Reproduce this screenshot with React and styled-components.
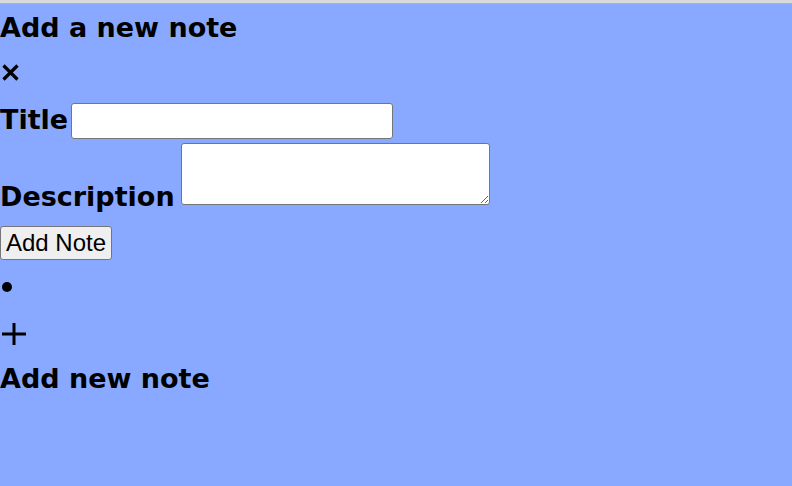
import styled, { createGlobalStyle } from 'styled-components';

const GlobalStyle = createGlobalStyle`
  html, body {
    margin: 0;
    padding: 0;
    background: #88a9ff;
  }
  body {
    font-family: "DejaVu Sans", Inter, sans-serif;
    color: #000;
    border-top: 3px solid #d9d9d9;
    min-height: 483px;
  }
`;

const Page = styled.main`
  display: flex;
  flex-direction: column;
  align-items: flex-start;
  box-shadow: inset 0 1px 0 #a4b0d6;
  padding-top: 1px;
`;

const Heading = styled.h2`
  margin: 0;
  margin-top: ${(p) => p.$top || 0}px;
  font-size: 27px;
  font-weight: 700;
  line-height: 47px;
`;

const IconLine = styled.div`
  height: ${(p) => p.$h}px;
  display: flex;
  align-items: center;
  padding-left: 2px;
`;

const Field = styled.div`
  display: flex;
  align-items: ${(p) => p.$align || 'center'};
  gap: ${(p) => p.$gap}px;
  margin-top: ${(p) => p.$top || 0}px;
`;

const Label = styled.label`
  font-size: 27px;
  font-weight: 700;
  line-height: 1;
  margin-bottom: ${(p) => p.$drop || 0}px;
`;

const TextInput = styled.input`
  width: 322px;
  height: 36px;
  box-sizing: border-box;
  border: 1px solid #767676;
  border-radius: 3px;
  background: #fff;
  padding: 1px 2px;
`;

const TextArea = styled.textarea`
  width: 309px;
  height: 62px;
  box-sizing: border-box;
  border: 1px solid #767676;
  border-radius: 3px;
  background: #fff;
  padding: 2px;
  display: block;
`;

const SubmitButton = styled.button`
  margin-top: 21px;
  font-family: "Liberation Sans", Arial, sans-serif;
  font-size: 24px;
  line-height: 28px;
  padding: 1px 5px;
  height: 34px;
  box-sizing: border-box;
  background: #efefef;
  border: 1px solid #767676;
  border-radius: 3px;
  color: #000;
`;

const Dot = styled.span`
  width: 10px;
  height: 10px;
  border-radius: 50%;
  background: #000;
`;

const Close = () => (
  <svg width="17" height="17" viewBox="0 0 17 17">
    <path d="M1.5 1.5L15.5 15.5M15.5 1.5L1.5 15.5" stroke="#000" strokeWidth="3.2" />
  </svg>
);

const Plus = () => (
  <svg width="24" height="22" viewBox="0 0 24 22">
    <path d="M12 0V22M0 11H24" stroke="#000" strokeWidth="3" />
  </svg>
);

const App = () => {
  return (
    <>
      <GlobalStyle />
      <Page>
        <Heading>Add a new note</Heading>
        <IconLine $h={42}>
          <Close />
        </IconLine>
        <Field $top={10} $gap={3}>
          <Label htmlFor="title" $drop={4}>Title</Label>
          <TextInput id="title" type="text" />
        </Field>
        <Field $top={4} $gap={6} $align="flex-end">
          <Label htmlFor="desc" $drop={-5}>Description</Label>
          <TextArea id="desc" />
        </Field>
        <SubmitButton>Add Note</SubmitButton>
        <IconLine $h={54}>
          <Dot />
        </IconLine>
        <IconLine $h={40}>
          <Plus />
        </IconLine>
        <Heading $top={1}>Add new note</Heading>
      </Page>
    </>
  );
};

export default App;
